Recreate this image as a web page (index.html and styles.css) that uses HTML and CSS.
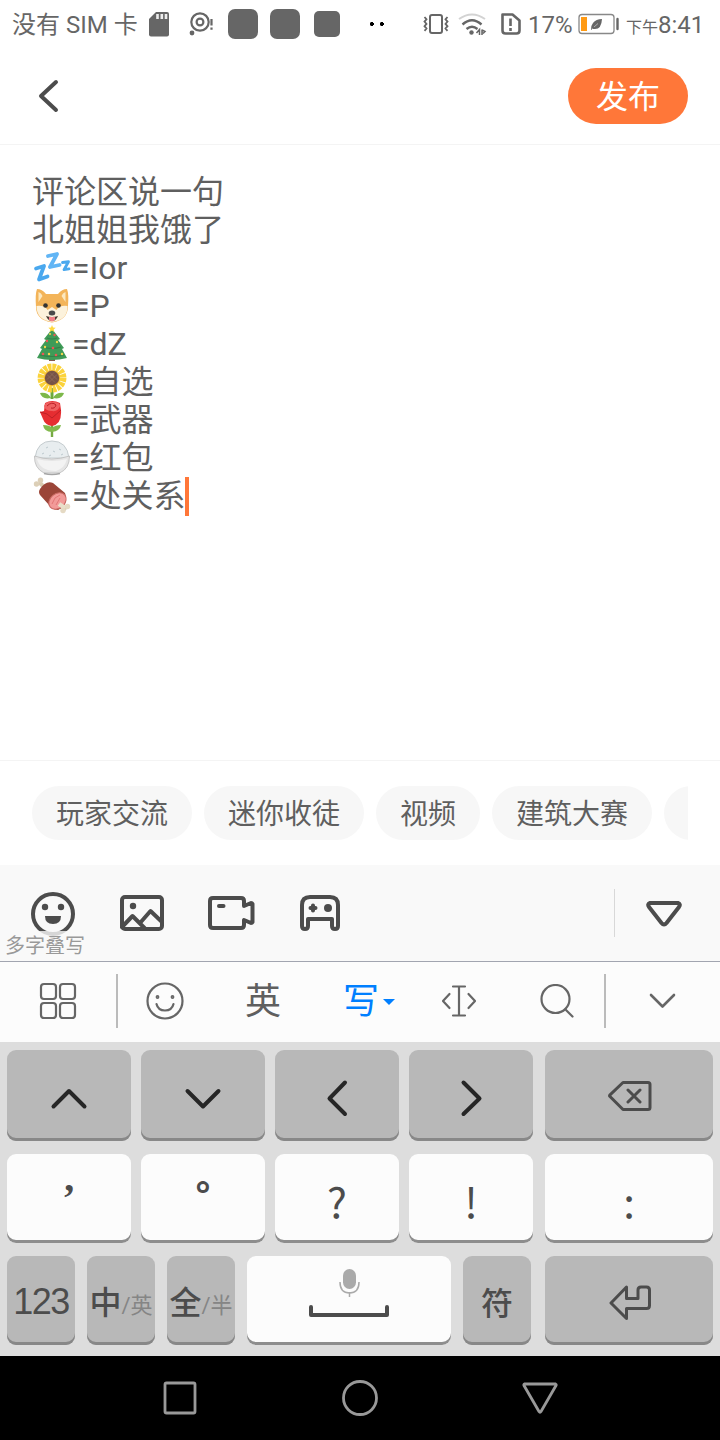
FILE: index.html
```html
<!DOCTYPE html>
<html lang="zh-CN">
  <head>
    <meta charset="utf-8">
    <meta name="viewport" content="width=device-width,initial-scale=1">
    <title>发布</title>
    <link rel="stylesheet" href="styles.css">
  </head>
  <body>
    <div id="wrap">
      <div class="status">
        <span class="sim">没有 SIM 卡</span>
        <svg class="status-left" width="244" height="48" viewBox="145 0 244 48">
          <path d="M156 12h11q2 0 2 2v20.500q0 2-2 2h-16q-2 0-2-2V19z" fill="#666"/>
          <path d="M157.500 14v5M161.800 14v5M166 14v5" stroke="#eee" stroke-width="2.600"/>
          <g fill="none" stroke="#666" stroke-width="2.200">
            <circle cx="200" cy="22" r="8.700"/>
            <circle cx="200" cy="22" r="3.400"/>
            <path d="M211.500 19v6.500M211.500 27.500v2.200"/>
          </g>
          <circle cx="192" cy="33" r="2.400" fill="#666"/>
          <g fill="#666">
            <rect x="228" y="9" width="30" height="30" rx="7"/>
            <rect x="270" y="9" width="30" height="30" rx="7"/>
            <rect x="314" y="11" width="26" height="26" rx="5"/>
          </g>
          <path d="M370.500 22h2.500v1h1v2h-1v1h-2.500v-1h-.5v-2h.5zM380.500 22h2.500v1h1v2h-1v1h-2.500v-1h-.5v-2h.5z" fill="#000"/>
        </svg>
        <svg class="status-right" width="104" height="48" viewBox="420 0 104 48">
          <g fill="none" stroke="#666" stroke-width="2">
            <rect x="430" y="15" width="12" height="18" rx="2"/>
            <path d="M424.500 17l2 2.300-2 2.300 2 2.300-2 2.300 2 2.300-2 2.300M447.500 17l-2 2.300 2 2.300-2 2.300 2 2.300-2 2.300 2 2.300" stroke-width="1.800"/>
            <path d="M459 19q13-9 26 0" stroke="#d3d3d3"/>
            <path d="M462.500 24.500q9.500-8.500 19 0M466.500 29q5.500-4.500 11 0" stroke-width="2.400"/>
            <path d="M479.500 35v-5.500l-3 3.500M482 29.500v5.500M482 30l3 1.500-2 2" stroke-width="1.500"/>
            <path d="M502.500 14.500h10l7 6v10q0 3-3 3h-11q-3 0-3-3z" stroke-width="2.600" stroke-linejoin="round"/>
            <path d="M510.500 18.500v7.500M510.500 28v3" stroke-width="2.600"/>
          </g>
          <circle cx="471.500" cy="32.500" r="2.200" fill="#666"/>
        </svg>
        <span class="percent">17%</span>
        <svg class="battery" width="42" height="48" viewBox="578 0 42 48">
          <rect x="579" y="14.500" width="35" height="19" rx="3" fill="#fff" stroke="#888" stroke-width="1.300"/>
          <path d="M581 17h6v14h-6z" fill="#ff9a14"/>
          <path d="M591 30q-.5-4 2-7 3-4 9-4-.5 10-7 10-2 0-3-.5l-.5 1.500z" fill="#666"/>
          <path d="M594 27l4-3.500" stroke="#ddd" stroke-width=".6"/>
          <path d="M617.500 19v10" stroke="#666" stroke-width="2.400" stroke-linecap="round"/>
        </svg>
        <span class="time"><small>下午</small>8:41</span>
      </div>

      <div class="header">
        <svg width="24" height="40" viewBox="36 76 24 40">
          <path d="M56 82L41 96 56 110" class="line"/>
        </svg>
        <div class="publish">发布</div>
      </div>

      <div class="editor">
        <p>评论区说一句</p>
        <p>北姐姐我饿了</p>
        <p><svg class="emoji" viewBox="0 0 40 38">
          <g fill="none" stroke="#4aa8ee" stroke-width="3.800" stroke-linejoin="round" stroke-linecap="round">
            <path d="M4 19.500l8-2.500-5 13.500 8.500-3"/>
            <path d="M16 7l9-2-7 13 9.500-2" stroke="#61b5f5"/>
            <path d="M30.500 13.500l6-.8-4.500 8 5-.8" stroke-width="2.800"/>
          </g>
        </svg><span>=Ior</span></p>
        <p><svg class="emoji" viewBox="0 0 40 38">
          <path d="M5 2q5 0 9 5h12q4-5 9-5 2 5 1 17 0 14-16 16.500Q4 33 4 20 3 7 5 2z" fill="#f3b459"/>
          <path d="M6.500 5q3 1 4 4l-4 6zM33.500 5q-3 1-4 4l4 6z" fill="#fce8bf"/>
          <path d="M4.500 19q8-1 11 4l4.500-3 4.500 3q3-5 11-4 .5 14-15.500 16Q4.500 33 4.500 19z" fill="#fcf2dc"/>
          <path d="M14 29q6 2 12 0-2 5-6 5t-6-5z" fill="#4b3a33"/>
          <path d="M17 30h6v2.500q-3 4-6 0z" fill="#f28088"/>
          <ellipse cx="20" cy="26" rx="3.300" ry="2.500" fill="#4a4a4a"/>
          <circle cx="13.500" cy="18.500" r="2.300" fill="#333"/><circle cx="26.500" cy="18.500" r="2.300" fill="#333"/>
        </svg><span>=P</span></p>
        <p><svg class="emoji" viewBox="0 0 40 38">
          <path d="M17 31h6v5h-6z" fill="#85584c"/>
          <path d="M20 4l8 10-2 1 6 8-2 1 5 9q-15 4-30 0l5-9-2-1 6-8-2-1z" fill="#3f9b57"/>
          <path d="M11 22q9 3 18 0M8 30q12 3 24 0M15 13q5 2 10 0" stroke="#338148" stroke-width="1.200" fill="none"/>
          <path d="M20 0l1 2.500 2.700.2-2 1.700.7 2.600-2.400-1.500L17.600 7l.7-2.600-2-1.700 2.700-.2z" fill="#ffd83c"/>
          <g fill="#ee5555"><circle cx="22.500" cy="10" r="1.200"/><circle cx="15" cy="16" r="1.200"/><circle cx="21" cy="23" r="1.300"/><circle cx="11" cy="29" r="1.300"/><circle cx="24" cy="30" r="1.300"/></g>
          <g fill="#f5d74c"><circle cx="18" cy="9" r="1"/><circle cx="25" cy="17" r="1.200"/><circle cx="13" cy="22" r="1.200"/><circle cx="17" cy="29" r="1.200"/><circle cx="30" cy="29" r="1.200"/></g>
        </svg><span>=dZ</span></p>
        <p><svg class="emoji" viewBox="0 0 40 38">
          <path d="M18.500 25h3v11h-3z" fill="#6eaa3c"/>
          <path d="M19 35Q10 37 8 30q8-1 11 5zM21 35q9 2 11-5-8-1-11 5z" fill="#7db84a"/>
          <circle cx="20" cy="15" r="10.700" fill="none" stroke="#fbd33b" stroke-width="7.500" stroke-dasharray="3.400 .8"/>
          <circle cx="20" cy="15" r="8" fill="#f5b930"/>
          <circle cx="20" cy="15" r="7.200" fill="#775447"/>
          <path d="M15 11.500l8 8M18 9.500l7 7M25 11.500l-8 8M22 9.500l-7 7" stroke="#93705f" stroke-width=".7"/>
        </svg><span>=自选</span></p>
        <p><svg class="emoji" viewBox="0 0 40 38">
          <path d="M20 22v14" stroke="#76aa43" stroke-width="2.400"/>
          <path d="M20 31Q12 31 11 24q7 0 9 3 3-3 9-3-1 6-9 7z" fill="#83b94e"/>
          <path d="M8 11l4-1 1-8q7-4 15 0l1 7q1 14-9 16-7-1-9-7z" fill="#e62d31"/>
          <path d="M12 5q2-5 9-4 7 0 7 4-2 6-8 5-7 0-8-5z" fill="#ef6060"/>
          <path d="M15 5q5-5 9-1-1 4-5 3M8 11q8 1 12 6l9-8" stroke="#bd2026" stroke-width="1" fill="none"/>
        </svg><span>=武器</span></p>
        <p><svg class="emoji" viewBox="0 0 40 38">
          <path d="M3 19Q5 2 20 2t17 17z" fill="#e8edef" stroke="#c5cccf" stroke-width="1"/>
          <path d="M2.500 17q17 6 35 0 0 13-10 17H12Q2 29 2.500 17z" fill="#e5e5e5" stroke="#bbb" stroke-width=".8"/>
          <path d="M5 20q15 4 30 0-2 9-11 12-16 0-19-12z" fill="#f3f3f3"/>
          <path d="M12 34.500q8 2 16 0" stroke="#a5a5a5" stroke-width="1.500" fill="none"/>
          <path d="M14 9l2-1M21 12l2 1M10 15l2-1M27 10l2 1M17 17l2-1M29 16l2-1" stroke="#bdc9ce" stroke-width="1"/>
        </svg><span>=红包</span></p>
        <p><svg class="emoji" viewBox="0 0 40 38">
          <path d="M12 10L7 5M27 27l7 6" stroke="#d8cab0" stroke-width="4"/>
          <g fill="#dccfb7"><circle cx="4.500" cy="7" r="2.700"/><circle cx="8.500" cy="3.200" r="2.700"/></g>
          <path d="M8 12Q14 3 21 6l12 10q4 12-7 17-5 0-9-5L8 18q-2-3 0-6z" fill="#9b4538"/>
          <ellipse cx="25.500" cy="24" rx="9.500" ry="7.300" transform="rotate(-40 25.500 24)" fill="#f29a98" stroke="#c96862"/>
          <path d="M27 27l6 4" stroke="#e9dfca" stroke-width="4.500"/>
          <path d="M20 27l3-6 5-3M24 28l4-7" stroke="#e27777" fill="none"/>
          <g fill="#e5dac4"><circle cx="35.500" cy="29.500" r="2.700"/><circle cx="31" cy="33.500" r="2.700"/></g>
        </svg><span>=处关系</span><i class="caret"></i></p>
      </div>

      <div class="tags">
        <div class="tag-list">
          <span class="tag">玩家交流</span>
          <span class="tag">迷你收徒</span>
          <span class="tag">视频</span>
          <span class="tag">建筑大赛</span>
          <span class="tag"></span>
        </div>
      </div>

      <div class="tools">
        <svg width="44" height="96" viewBox="31 865 44 96">
          <circle cx="53" cy="914" r="20" class="line"/>
          <circle cx="45" cy="907" r="3.200" fill="#4c4c4c"/><circle cx="61" cy="907" r="3.200" fill="#4c4c4c"/>
          <path d="M45 916h16q0 8-8 8t-8-8z" fill="#4c4c4c"/>
        </svg>
        <svg width="44" height="96" viewBox="120 865 44 96">
          <rect x="122" y="897" width="40" height="32" rx="3" class="line"/>
          <circle cx="133" cy="906" r="3.200" fill="#4c4c4c"/>
          <path d="M122 927l10.500-11 12 12M140 923l10.500-12 11.500 11" class="line"/>
        </svg>
        <svg class="video" width="47" height="96" viewBox="208 865 47 96">
          <path d="M213 898h28q3 0 3 3v5l7-3q1 0 1.500 1v18q-.5 1-1.500 1l-7-3v5q0 3-3 3h-28q-3 0-3-3v-24q0-3 3-3z" class="line"/>
          <path d="M219 906h4.500" class="line"/>
        </svg>
        <svg width="40" height="96" viewBox="300 865 40 96">
          <path d="M310 897h20q8 0 8 8v21q0 3-3 3t-3-3v-7h-24v7q0 3-3 3t-3-3v-21q0-8 8-8z" class="line"/>
          <path d="M313 905.500v5M310.500 908h5" class="line"/>
          <circle cx="328" cy="908" r="4" fill="#4c4c4c"/>
        </svg>
        <div class="fold">
          <svg width="36" height="96" viewBox="646 865 36 96">
            <path d="M650 903h28q3 1 1 4l-12.500 16q-2.500 3-5 0L649 907q-2-3 1-4z" class="line"/>
          </svg>
        </div>
        <div class="hint">多字叠写</div>
      </div>

      <div class="ime-bar">
        <div class="ime-end">
          <svg width="38" height="38" viewBox="0 0 38 38" class="thin">
            <rect x="2" y="2" width="15" height="15" rx="3"/><rect x="21" y="2" width="15" height="15" rx="3"/>
            <rect x="2" y="21" width="15" height="15" rx="3"/><rect x="21" y="21" width="15" height="15" rx="3"/>
          </svg>
        </div>
        <div class="ime-items">
          <div><svg width="38" height="38" viewBox="0 0 38 38" class="thin">
            <circle cx="19" cy="19" r="17.500"/><path d="M10.500 22q1.500 6.500 8.500 6.500t8.500-6.500"/>
            <circle cx="11.500" cy="15" r=".8"/><circle cx="26.500" cy="15" r=".8"/>
          </svg></div>
          <div class="word">英</div>
          <div class="word active">写<i></i></div>
          <div><svg width="38" height="32" viewBox="0 0 38 32" class="thin">
            <path d="M13 1.500h12M19 1.500v29M13 30.500h12M9.500 9L3 16l6.500 7M28.500 9l6.500 7-6.500 7"/>
          </svg></div>
          <div><svg width="34" height="34" viewBox="0 0 34 34" class="thin">
            <circle cx="15.500" cy="15" r="14"/><path d="M25.500 25.500l7 7"/>
          </svg></div>
        </div>
        <div class="ime-end ime-close">
          <svg width="28" height="16" viewBox="0 0 28 16" class="thin"><path d="M3 2l11.500 11.500L26 2"/></svg>
        </div>
      </div>

      <div class="keyboard">
        <div class="row row-top">
          <div class="key gray"><svg width="38" height="38" viewBox="0 0 38 38" class="arrow"><path d="M3.500 27.500L19 12l15.500 15.500"/></svg></div>
          <div class="key gray"><svg width="38" height="38" viewBox="0 0 38 38" class="arrow"><path d="M3.500 12L19 27.500 34.500 12"/></svg></div>
          <div class="key gray"><svg width="38" height="38" viewBox="0 0 38 38" class="arrow"><path d="M27 3.500L11.500 19.500 27 35"/></svg></div>
          <div class="key gray"><svg width="38" height="38" viewBox="0 0 38 38" class="arrow"><path d="M11.500 3.500L27.500 19.500 11.500 35"/></svg></div>
          <div class="key gray"><svg width="44" height="30" viewBox="0 0 44 30" class="func back"><path d="M15 1.500h25q2 0 2 2v23q0 2-2 2H15L2 15.500q-.8-.8 0-1.600zM20 9l12 12M32 9L20 21"/></svg></div>
        </div>
        <div class="row row-mid">
          <div class="key comma">’</div>
          <div class="key stop">°</div>
          <div class="key mark">?</div>
          <div class="key mark">!</div>
          <div class="key mark">:</div>
        </div>
        <div class="row row-bottom">
          <div class="key gray num">123</div>
          <div class="key gray lang">中<small>/英</small></div>
          <div class="key gray lang">全<small>/半</small></div>
          <div class="key"><svg class="space" width="80" height="50" viewBox="309 1268 80 50">
            <rect x="343" y="1269" width="13" height="20" rx="6.500" fill="#aaa"/>
            <path d="M340 1282q0 11 9.500 11t9.500-11M349.500 1292v5" fill="none" stroke="#aaa" stroke-width="1.500"/>
            <path d="M311 1307v8h76v-8" fill="none" stroke="#4c4c4c" stroke-width="4" stroke-linejoin="round" stroke-linecap="round"/>
          </svg></div>
          <div class="key gray sym">符</div>
          <div class="key gray"><svg width="42" height="36" viewBox="0 0 42 36" class="func enter"><path d="M17.500 2v11.500H29V5q0-3 3-3h5.500q3 0 3 3v15.500q0 3-3 3h-20v10L2 18z"/></svg></div>
        </div>
      </div>

      <div class="nav">
        <svg width="36" height="36" viewBox="0 0 36 36"><rect x="3" y="3" width="30" height="30" rx="1.500"/></svg>
        <svg width="36" height="36" viewBox="0 0 36 36"><circle cx="18" cy="18" r="16.500"/></svg>
        <svg width="36" height="36" viewBox="0 0 36 36"><path d="M2.500 4h31q1 .5.500 1.500L19 31.500q-1 1.500-2 0L2 5.500q-.5-1 .5-1.500z"/></svg>
      </div>
    </div>
  </body>
</html>
```

FILE: styles.css
```css
* {
  margin: 0;
  padding: 0;
  box-sizing: border-box;
}
body {
  background: #fff;
  color: #5f5f5f;
  font-family: Roboto, "Noto Sans CJK SC", sans-serif;
  font-size: 32px;
}
svg {
  display: block;
  flex: none;
}
#wrap {
  width: 720px;
  height: 1440px;
  overflow: hidden;
}
.line {
  fill: none;
  stroke: #4c4c4c;
  stroke-width: 4;
  stroke-linecap: round;
  stroke-linejoin: round;
}

/* status bar */
.status {
  display: flex;
  height: 48px;
  padding-left: 12px;
  line-height: 50px;
  font-size: 24px;
  color: #666;
  white-space: nowrap;
}
.sim {
  width: 133px;
}
.status-right {
  margin-left: 31px;
}
.percent {
  width: 50px;
  padding-left: 4px;
}
.battery {
  margin-left: 4px;
}
.time {
  margin-left: 6px;
}
.time small {
  font-size: 16px;
}

/* header */
.header {
  display: flex;
  align-items: center;
  justify-content: space-between;
  height: 97px;
  padding: 0 32px 0 36px;
  border-bottom: 1px solid #f4f4f4;
}
.publish {
  width: 120px;
  height: 56px;
  line-height: 58px;
  border-radius: 28px;
  background: #ff7739;
  color: #fff;
  text-align: center;
}

/* text */
.editor {
  height: 616px;
  padding: 28px 32px 0;
  border-bottom: 1px solid #f4f4f4;
}
.editor p {
  display: flex;
  height: 38px;
  line-height: 38px;
  white-space: nowrap;
}
.emoji {
  width: 40px;
  height: 38px;
}
.caret {
  width: 4px;
  height: 39px;
  margin-left: -1px;
  background: #ff7739;
}

/* tags */
.tags {
  height: 104px;
  padding: 25px 32px;
}
.tag-list {
  display: flex;
  gap: 12px;
  overflow: hidden;
}
.tag {
  flex: none;
  height: 54px;
  min-width: 104px;
  padding: 0 24px;
  line-height: 58px;
  border-radius: 27px;
  background: #f7f7f7;
  font-size: 28px;
}

/* toolbar */
.tools {
  display: flex;
  position: relative;
  gap: 45px;
  height: 97px;
  padding-left: 31px;
  background: #f9f9f9;
  border-bottom: 1px solid #a2a5b0;
}
.video {
  margin-left: -1px;
}
.fold {
  display: flex;
  align-self: flex-start;
  justify-content: center;
  width: 106px;
  margin-left: auto;
  padding-right: 6px;
  background: linear-gradient(#d8d8d8, #d8d8d8) 0 24px / 1px 48px no-repeat;
}
.hint {
  position: absolute;
  left: 0;
  bottom: 0;
  width: 90px;
  height: 30px;
  padding-left: 5px;
  line-height: 30px;
  font-size: 20px;
  color: #999;
  background: rgba(249,249,249,.8);
}

.ime-bar {
  display: flex;
  align-items: center;
  height: 80px;
  padding-bottom: 2px;
  background: #fcfcfc;
}
.ime-end {
  display: flex;
  align-items: center;
  justify-content: center;
  width: 116px;
  height: 54px;
}
.ime-close {
  width: 114px;
  padding-right: 3px;
}
.ime-close .thin {
  stroke-width: 2.6;
}
.ime-items {
  display: flex;
  width: 490px;
  justify-content: center;
  align-items: center;
  height: 54px;
  border-left: 2px solid #bbb;
  border-right: 2px solid #bbb;
}
.ime-items div {
  display: flex;
  flex: none;
  align-items: center;
  justify-content: center;
  width: 98px;
  line-height: 54px;
  font-size: 36px;
}
.ime-items .word {
  padding-top: 2px;
}
.ime-items .active {
  color: #007fff;
  padding-left: 16px;
}
.active i {
  margin-left: 4px;
  border: 6px solid transparent;
  border-top-color: #007fff;
  border-bottom: 0;
}
.thin {
  fill: none;
  stroke: #666;
  stroke-width: 2.2;
  stroke-linecap: round;
  stroke-linejoin: round;
}

/* keyboard */
.keyboard {
  height: 314px;
  padding: 8px 7px 0;
  background: #ddd;
}
.row {
  display: grid;
  grid-template-columns: repeat(4, 124px) 168px;
  column-gap: 10px;
}
.row-top {
  height: 91px;
  margin-bottom: 13px;
}
.row-mid {
  height: 89px;
  margin-bottom: 13px;
}
.row-bottom {
  height: 89px;
  grid-template-columns: 68px 68px 68px 204px 68px 168px;
  column-gap: 12px;
}
.row .key:last-child {
  margin-left: 2px;
  margin-right: -2px;
}
.key {
  display: flex;
  align-items: center;
  justify-content: center;
  border-radius: 9px;
  background: #fcfcfc;
  box-shadow: inset 0 -3px #8d8d8d;
  color: #4c4c4c;
  white-space: nowrap;
}
.gray {
  background: #b8b8b8;
  box-shadow: inset 0 -3px #888;
}
.arrow {
  margin-top: 5px;
  fill: none;
  stroke: #262626;
  stroke-width: 4;
  stroke-linecap: round;
  stroke-linejoin: round;
}
.func {
  fill: none;
  stroke: #4c4c4c;
  stroke-width: 3;
  stroke-linecap: round;
  stroke-linejoin: round;
}
.back {
  margin-left: 2px;
}
.enter {
  margin-left: 2px;
  margin-top: 4px;
}
.space {
  margin-bottom: 15px;
}
.mark {
  padding-top: 2px;
  font-family: "Noto Sans CJK SC", sans-serif;
  font-size: 42px;
}
.comma {
  padding-bottom: 2px;
  font-family: "Liberation Serif", serif;
  font-size: 40px;
  font-weight: bold;
}
.stop {
  padding-bottom: 10px;
  font-family: "Noto Sans", sans-serif;
  font-size: 36px;
  font-weight: 600;
}
.num {
  font-family: "Liberation Sans", sans-serif;
  font-size: 36px;
  letter-spacing: -1.5px;
  padding-top: 3px;
}
.lang {
  padding-bottom: 2px;
  font-weight: 500;
}
.lang small {
  margin-top: 6px;
  font-size: 22px;
  font-weight: 400;
  color: #858585;
}
.sym {
  font-weight: 500;
}

/* system nav */
.nav {
  display: flex;
  align-items: center;
  justify-content: center;
  gap: 144px;
  height: 84px;
  background: #000;
}
.nav svg {
  fill: none;
  stroke: #999;
  stroke-width: 2.8;
}
```
